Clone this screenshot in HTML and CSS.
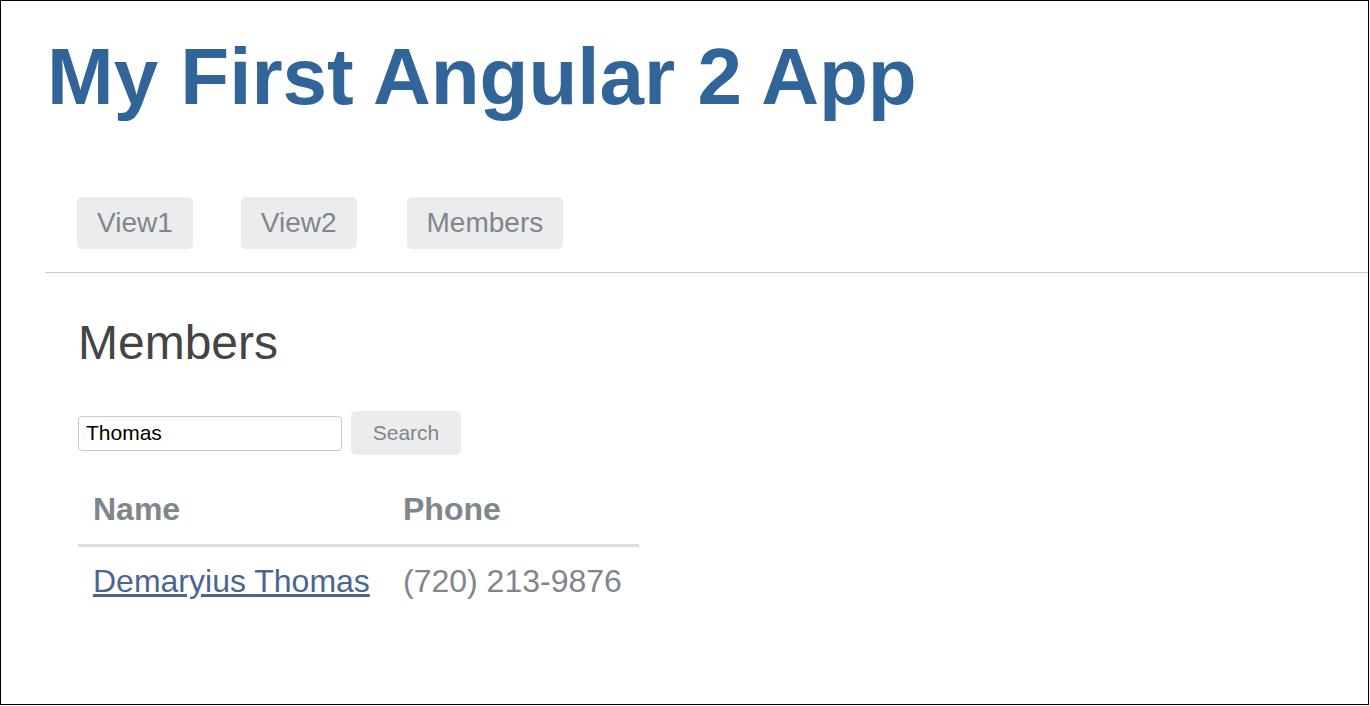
FILE: index.html
```html
<!DOCTYPE html>
<html>
<head>
<meta charset="utf-8">
<title>My First Angular 2 App</title>
<link rel="stylesheet" href="styles.css">
</head>
<body>
<div class="frame">
  <h1 class="title">My First Angular 2 App</h1>
  <nav class="nav">
    <a class="nav-btn" href="#">View1</a>
    <a class="nav-btn" href="#">View2</a>
    <a class="nav-btn" href="#">Members</a>
  </nav>
  <hr class="divider">
  <section class="members">
    <h2 class="members-title">Members</h2>
    <form class="search">
      <input class="search-input" type="text" value="Thomas">
      <button class="search-btn" type="button">Search</button>
    </form>
    <table class="table">
      <thead>
        <tr><th class="col-name">Name</th><th>Phone</th></tr>
      </thead>
      <tbody>
        <tr><td><a class="member-link" href="#">Demaryius Thomas</a></td><td>(720) 213-9876</td></tr>
      </tbody>
    </table>
  </section>
</div>
</body>
</html>
```
FILE: styles.css
```css
html, body {
  margin: 0;
  padding: 0;
  background: #fff;
}
body {
  font-family: "Liberation Sans", Arial, sans-serif;
}
.frame {
  box-sizing: border-box;
  width: 1369px;
  height: 705px;
  border: 1px solid #000;
  overflow: hidden;
}
.title {
  margin: 36px 0 0 46px;
  font-size: 80px;
  line-height: 80px;
  font-weight: bold;
  color: #31659a;
}
.nav {
  display: flex;
  gap: 48px;
  margin-top: 80px;
  padding-left: 76px;
}
.nav-btn {
  display: block;
  height: 52px;
  line-height: 52px;
  padding: 0 20px;
  font-size: 28px;
  color: #80868c;
  background: #ebecee;
  border-radius: 5px;
  text-decoration: none;
}
.nav-btn + .nav-btn + .nav-btn {
  margin-left: 2px;
}
.divider {
  margin: 23px 0 0 44px;
  border: 0;
  border-top: 1px solid #cccccc;
  height: 0;
}
.members {
  padding-left: 77px;
}
.members-title {
  margin: 46px 0 0 0;
  font-size: 48px;
  line-height: 48px;
  font-weight: normal;
  color: #444;
}
.search {
  display: flex;
  align-items: center;
  gap: 9px;
  margin-top: 44px;
}
.search-input {
  box-sizing: border-box;
  width: 264px;
  height: 35px;
  border: 1px solid #c8ccd0;
  border-radius: 4px;
  padding: 0 7px;
  font-family: "Liberation Sans", Arial, sans-serif;
  font-size: 21px;
  color: #000;
  outline: none;
}
.search-btn {
  box-sizing: border-box;
  width: 110px;
  height: 44px;
  border: 0;
  border-radius: 5px;
  background: #ebecee;
  font-family: "Liberation Sans", Arial, sans-serif;
  font-size: 21px;
  color: #80868c;
}
.table {
  margin-top: 20px;
  width: 561px;
  border-collapse: collapse;
}
.table th, .table td {
  padding: 15px;
  font-size: 32px;
  line-height: 39px;
  text-align: left;
  color: #7f868c;
}
.table th {
  font-weight: bold;
  border-bottom: 3px solid #dddddd;
}
.col-name {
  width: 280px;
}
.member-link {
  color: #4a6690;
  text-decoration: underline;
}
```
